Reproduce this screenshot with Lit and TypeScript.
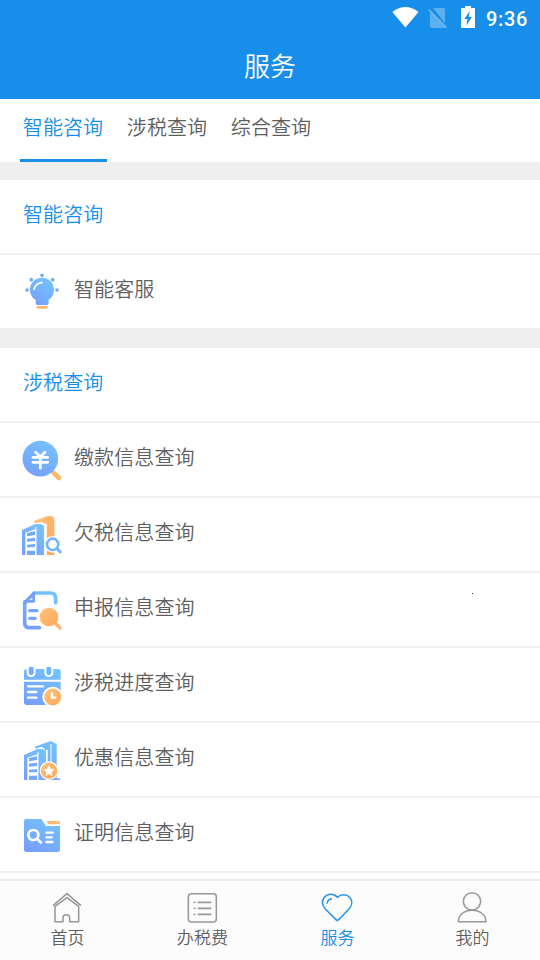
import { LitElement, html, css, svg } from "lit";
import { customElement, property } from "lit/decorators.js";

const gradients = svg`<defs>
  <linearGradient id="b" x1="0.8" y1="0" x2="0.2" y2="1"><stop offset="0" stop-color="#74c3ff"/><stop offset="1" stop-color="#769ffc"/></linearGradient>
  <linearGradient id="o" x1="0" y1="0" x2="1" y2="1"><stop offset="0" stop-color="#ffc27c"/><stop offset="1" stop-color="#ffa857"/></linearGradient>
</defs>`;

const building = svg`
  <path d="M36 150V75L76 57L92 57L102 62V150Z" fill="url(#b)"/>
  <path d="M78 66V150" stroke="#fff" stroke-width="3"/>
  <path d="M46 83L78 72V150H46Z" fill="#fff"/>
  <path d="M51 84L75 79V90L51 94ZM51 101L75 98V108L51 110ZM51 119L75 117V127H51ZM51 137H75V150H51Z" fill="#72a8fd"/>`;

const icons: Record<string, unknown> = {
  bulb: svg`<g transform="translate(0 -6)">
    <path d="M96 53C75 53 60 68 60 89C60 103 67 113 77 119V129Q77 135 83 135H110Q116 135 116 129V119C126 113 132 103 132 89C132 68 117 53 96 53Z" fill="url(#b)"/>
    <path d="M72 88Q75 71 96 67" fill="none" stroke="#fff" stroke-width="5" stroke-linecap="round"/>
    <path d="M84 142H109" stroke="#ffb56e" stroke-width="8" stroke-linecap="round"/>
    <g fill="#6faefc"><circle cx="96" cy="46" r="5.5"/><circle cx="64" cy="59" r="5.5"/><circle cx="128" cy="59" r="5.5"/><circle cx="51" cy="90" r="5.5"/><circle cx="141" cy="90" r="5.5"/></g></g>`,
  pay: svg`
    <path d="M130 128L147 144" stroke="#ffb56c" stroke-width="14" stroke-linecap="round"/>
    <circle cx="91" cy="86" r="53.5" fill="url(#b)"/>
    <path d="M77 67L91 80L105 67M69 82H113M69 97H113M91 80V115" fill="none" stroke="#fff" stroke-width="8.5" stroke-linecap="round" stroke-linejoin="round"/>`,
  owe: svg`
    <path d="M70 49L113 33H121Q133 33 133 45V150H105V58L96 50L76 55Z" fill="url(#o)"/>
    <path d="M106 56V150" stroke="#fff" stroke-width="9"/>
    ${building}
    <circle cx="128" cy="118" r="25" fill="#fff"/>
    <circle cx="128" cy="118" r="17" fill="#fff" stroke="#72b5ff" stroke-width="8"/>
    <path d="M141 131L151 141" stroke="#72b5ff" stroke-width="9" stroke-linecap="round"/>`,
  declare: svg`
    <path d="M137 68V55Q137 39 121 39H73L44 69V128Q44 143 59 143H88" fill="none" stroke="url(#b)" stroke-width="11" stroke-linecap="round"/>
    <path d="M71 39V64H44V69L73 39Z" fill="#fff" stroke="#769ffc" stroke-width="8" stroke-linejoin="round"/>
    <path d="M59 92H81M59 115H76" stroke="#78a4fc" stroke-width="9.5" stroke-linecap="round"/>
    <circle cx="117" cy="111" r="28" fill="url(#o)"/>
    <path d="M134 128L150 144" stroke="#ffb268" stroke-width="10" stroke-linecap="round"/>`,
  progress: svg`
    <path d="M50 42H144Q152 42 152 50V74H42V50Q42 42 50 42ZM42 80H152V150H50Q42 150 42 142Z" fill="url(#b)"/>
    <rect x="53" y="32" width="21" height="31" rx="10" fill="#6daefd" stroke="#fff" stroke-width="6"/>
    <rect x="106" y="32" width="21" height="31" rx="10" fill="#6cb8ff" stroke="#fff" stroke-width="6"/>
    <path d="M54 94H99M54 111H79M54 128H79" stroke="#fff" stroke-width="7" stroke-linecap="round"/>
    <path d="M134 155H157V120Z" fill="#fff"/>
    <circle cx="128" cy="126" r="31" fill="#fff"/><circle cx="128" cy="126" r="25.5" fill="url(#o)"/>
    <path d="M126 112V128H139" fill="none" stroke="#fff" stroke-width="7"/>`,
  discount: svg`
    <path d="M75 50L122 33L140 42V145H150V150H105V57L94 50L77 56Z" fill="url(#b)"/>
    <path d="M123 42V140" stroke="#fff" stroke-width="3"/>
    <path d="M110 60V150" stroke="#fff" stroke-width="6"/>
    <g transform="translate(6 0)">${building}</g>
    <circle cx="117" cy="122" r="28" fill="#fff"/><circle cx="117" cy="122" r="24.5" fill="url(#o)"/>
    <path d="M117 105L122 116L134 118L125 126L127 138L117 132L107 138L109 126L100 118L112 116Z" fill="#fff"/>`,
  proof: svg`
    <path d="M48 42H94L108 63H150V134Q150 141 143 141H49Q42 141 42 134V48Q42 42 48 42Z" fill="url(#b)"/>
    <path d="M115 48H146Q150 48 150 52V58H117Q111 56 111 51Q112 48 115 48Z" fill="#ffba75"/>
    <circle cx="70" cy="90" r="15" fill="none" stroke="#fff" stroke-width="8"/>
    <path d="M81 101L93 113" stroke="#fff" stroke-width="8" stroke-linecap="round"/><path d="M109 83H128M109 97H125M109 111H128" stroke="#fff" stroke-width="7" stroke-linecap="round"/>`,
};

@customElement("status-bar")
class StatusBar extends LitElement {
  static styles = css`
    :host { display: flex; height: 38px; justify-content: flex-end; color: #fff; }
    svg { width: 95px; height: 38px; }
    .time { width: 55px; box-sizing: border-box; padding: 7px 0 0 1px; font: 500 20px/24px Roboto, sans-serif; letter-spacing: 0.65px; white-space: nowrap; }
  `;
  render() {
    return html`<svg viewBox="0 0 95 38">
        <path d="M2.3 12Q15.4 1.8 28.5 12L15.4 27.5Z" fill="#fff"/>
        <path d="M40 12L50.5 22.5L56 28H42Q40 28 40 26ZM43 8H53.5Q55 8 55 9.5V23Z" fill="#fff" opacity=".3"/>
        <path d="M38.5 9.5L56.5 27.5" stroke="#fff" stroke-width="1.5" opacity=".4"/>
        <path d="M71 8H75V6H81V8H85V28H71Z" fill="#fff"/>
        <path d="M79.8 11L74.3 19H77.5L76.3 25.5L82 17H78.7Z" fill="#178eea"/>
      </svg><div class="time">9:36</div>`;
  }
}

@customElement("service-row")
class ServiceRow extends LitElement {
  @property() icon = "";
  @property() label = "";
  static styles = css`
    :host { display: flex; height: 75px; box-sizing: border-box; border-top: 2px solid #f0f0f0; padding-left: 20px; align-items: flex-start; background: #fff; }
    svg { width: 44px; height: 44px; margin: 15px 10px 0 0; flex: none; }
    span { line-height: 30px; margin-top: 19px; font-size: 20px; letter-spacing: 0.1px; color: #5e5e5e; }
  `;
  render() {
    return html`<svg viewBox="30 24 132 132">${gradients}${icons[this.icon]}</svg><span>${this.label}</span>`;
  }
}

const navItems = [
  { label: "首页", box: "149 75 108 108", art: svg`<path d="M161 122L203 86L245 122M167 124V170H191V158Q191 149 201 149Q211 149 211 158V170H238V124L203 98Z"/>` },
  { label: "办税费", box: "553 75 108 108", art: svg`<rect x="566" y="86" width="84" height="85" rx="9"/><path stroke-width="5" d="M594 112H635M594 130H635M594 148H635M582 112H587M582 130H587M582 148H587"/>` },
  { label: "服务", active: true, box: "148 75 108 108", art: svg`<path d="M203 97C192 84 173 86 164 97C155 109 158 122 167 132L199 164Q203 168 207 164L238 132C248 121 249 107 240 97C231 87 214 87 203 97ZM172 116Q174 102 187 101"/>` },
  { label: "我的", box: "553 75 108 108", art: svg`<circle cx="607" cy="109" r="26"/><path d="M566 170C566 150 583 136 607 136C632 136 649 150 649 170Z"/>` },
];

@customElement("bottom-nav")
class BottomNav extends LitElement {
  static styles = css`
    :host { display: grid; grid-template-columns: repeat(4, 1fr); height: 81px; flex: none; box-sizing: border-box; border-top: 2px solid #ebebeb; background: #fcfcfc; }
    .item { display: flex; flex-direction: column; align-items: center; padding-top: 9px; color: #5e5e5e; font-size: 17px; line-height: 24px; }
    svg { width: 36px; height: 36px; margin-right: 1px; fill: none; stroke: #989898; stroke-width: 4.6; stroke-linejoin: round; }
    .active { color: #178eea; }
    .active svg { stroke: #2a95e9; }
    span { margin-top: -1px; }
  `;
  render() {
    return navItems.map(n => html`<div class="item ${n.active ? "active" : ""}"><svg viewBox=${n.box}>${n.art}</svg><span>${n.label}</span></div>`);
  }
}

const queries = [["pay", "缴款信息查询"], ["owe", "欠税信息查询"], ["declare", "申报信息查询"], ["progress", "涉税进度查询"], ["discount", "优惠信息查询"], ["proof", "证明信息查询"]];

@customElement("app-root")
class AppRoot extends LitElement {
  static styles = css`
    :host { display: flex; flex-direction: column; position: relative; width: 540px; height: 960px; overflow: hidden; background: #efefef; font-family: "Noto Sans CJK SC DemiLight", "Noto Sans CJK SC", sans-serif; font-weight: 350; font-size: 20px; letter-spacing: 0.1px; }
    header { height: 99px; flex: none; background: #178eea; color: #fff; }
    .title { text-align: center; font-size: 26px; line-height: 38px; margin-top: 8px; letter-spacing: 0; }
    .tabs { height: 63px; flex: none; display: flex; gap: 17px; padding-left: 19.5px; background: #fff; color: #5e5e5e; }
    .tab { box-sizing: border-box; width: 87px; text-align: center; line-height: 30px; padding-top: 13px; border-bottom: 3px solid transparent; }
    .tab.active { color: #178eea; border-color: #178eea; }
    main { flex: 1; min-height: 0; overflow: hidden; padding-top: 18px; }
    section { background: #fff; margin-bottom: 20px; }
    .heading { height: 73px; box-sizing: border-box; padding: 19px 0 0 23px; line-height: 30px; color: #178eea; }
    .end { height: 8px; border-top: 2px solid #f0f0f0; }
    .dot { position: absolute; left: 472px; top: 593px; width: 1px; height: 1px; background: #333; }
  `;
  render() {
    return html`
      <header><status-bar></status-bar><div class="title">服务</div></header>
      <nav class="tabs"><div class="tab active">智能咨询</div><div class="tab">涉税查询</div><div class="tab">综合查询</div></nav>
      <main>
        <section><div class="heading">智能咨询</div><service-row icon="bulb" label="智能客服"></service-row></section>
        <section><div class="heading">涉税查询</div>${queries.map(([i, l]) => html`<service-row icon=${i} label=${l}></service-row>`)}<div class="end"></div></section>
      </main>
      <bottom-nav></bottom-nav>
      <div class="dot"></div>`;
  }
}
